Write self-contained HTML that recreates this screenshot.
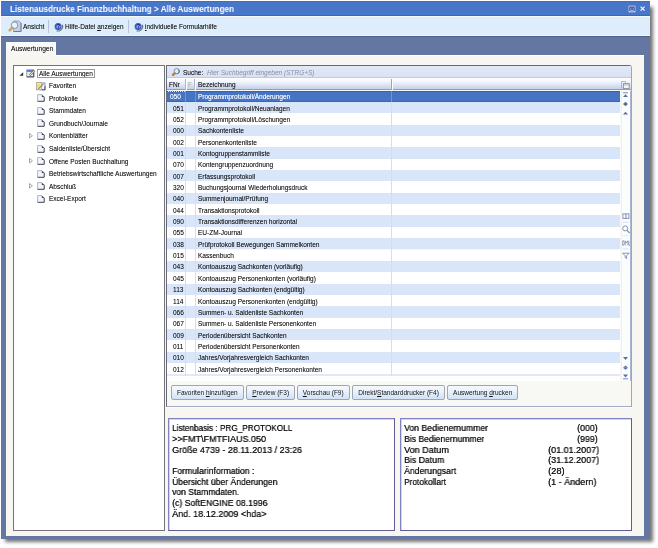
<!DOCTYPE html><html><head><meta charset="utf-8"><style>
*{margin:0;padding:0;box-sizing:border-box}
html,body{width:658px;height:548px;overflow:hidden;background:#fff;font-family:"Liberation Sans",sans-serif;color:#111111}
.a{position:absolute}
.t{position:absolute;white-space:nowrap;font-size:6.5px;line-height:8px}
svg{position:absolute;overflow:visible}
body{-webkit-font-smoothing:antialiased}
.t{will-change:transform;text-shadow:0.1px 0 0 rgba(0,0,0,0.35)}
u{text-decoration-thickness:0.5px;text-underline-offset:0.8px}
</style></head><body>
<div id="wrap" style="position:absolute;left:0;top:0;width:658px;height:548px"><div class="a" style="left:4px;top:6px;width:646px;height:533px;background:#888;box-shadow:2px 2px 3.5px 1px rgba(0,0,0,0.55)"></div><div class="a" style="left:1px;top:1px;width:649px;height:538px;background:#6477a3"></div><div class="a" style="left:1px;top:35.8px;width:649px;height:503.2px;background:#6477a3;border-top:1px solid #50608f"></div><div class="a" style="left:1px;top:1px;width:649px;height:15.3px;background:#4876c9;border-top:1px solid #5068a6;border-bottom:1px solid #4a64a0"></div><div class="t" style="left:10px;top:3.1px;font-weight:bold;color:#fff;text-shadow:none;font-size:9px;line-height:12px;transform:scaleX(0.905);transform-origin:0 0">Listenausdrucke Finanzbuchhaltung &gt; Alle Auswertungen</div><svg style="left:627.5px;top:4.8px" width="8" height="8" viewBox="0 0 8 8"><rect x="0.4" y="0.4" width="7.2" height="7.2" rx="1.2" fill="#a3b8e8"/><path d="M1.9 6.4V2.2H6.1V6.4" fill="none" stroke="#26397c" stroke-width="0.9"/><rect x="3.3" y="3.3" width="1.5" height="1.6" fill="#26397c"/><circle cx="1.6" cy="6.6" r="0.5" fill="#e8f0ff"/><circle cx="6.4" cy="6.6" r="0.5" fill="#e8f0ff"/></svg><svg style="left:639.8px;top:5.8px" width="5.2" height="5.2" viewBox="0 0 5.2 5.2"><path d="M0.6 0.6L4.6 4.6M4.6 0.6L0.6 4.6" stroke="#f4f8ff" stroke-width="1.2"/></svg><div class="a" style="left:1px;top:16.3px;width:649px;height:19.5px;background:#ddedfc;border-top:1px solid #f3fbff;border-bottom:1px solid #f0f8ff"></div><svg style="left:8px;top:20px" width="14" height="13" viewBox="0 0 14 13"><path d="M5.5 1H11L13 3V11.5H5.5Z" fill="#c9cfe2" stroke="#8f98b2" stroke-width="0.8"/><path d="M13 3V11.5H5.5" fill="none" stroke="#6f7894" stroke-width="0.9"/><circle cx="6.5" cy="5.2" r="3.3" fill="#e6f5fd" stroke="#7b8ba6" stroke-width="0.9"/><path d="M4.3 7.6L1.6 10.4" stroke="#c4a26f" stroke-width="2.4" stroke-linecap="round"/></svg><div class="t" style="left:23.4px;top:23.4px;">Ansicht</div><div class="a" style="left:48px;top:20px;width:1px;height:13px;background:#b7c5d8"></div><svg style="left:53.5px;top:21.2px" width="11" height="11" viewBox="0 0 11 11"><path d="M8.4 3.8A4.6 4.6 0 0 1 2.5 9.7" fill="none" stroke="#6d7482" stroke-width="1.1"/><circle cx="4.1" cy="5.4" r="3.5" fill="#3d5cc4"/><circle cx="4.3" cy="5.6" r="2" fill="#7d9ae6"/><path d="M2.7 4.2Q3.9 2.6 5.3 3.6Q5.9 4.8 4.4 5.7V6.6" fill="none" stroke="#1d2f86" stroke-width="1"/><circle cx="4.4" cy="7.9" r="0.6" fill="#1d2f86"/></svg><div class="t" style="left:65px;top:23.4px;">Hilfe-Datei <u>a</u>nzeigen</div><div class="a" style="left:128px;top:20px;width:1px;height:13px;background:#b7c5d8"></div><svg style="left:133.5px;top:21.2px" width="11" height="11" viewBox="0 0 11 11"><path d="M8.4 3.8A4.6 4.6 0 0 1 2.5 9.7" fill="none" stroke="#6d7482" stroke-width="1.1"/><circle cx="4.1" cy="5.4" r="3.5" fill="#3d5cc4"/><circle cx="4.3" cy="5.6" r="2" fill="#7d9ae6"/><path d="M2.7 4.2Q3.9 2.6 5.3 3.6Q5.9 4.8 4.4 5.7V6.6" fill="none" stroke="#1d2f86" stroke-width="1"/><circle cx="4.4" cy="7.9" r="0.6" fill="#1d2f86"/></svg><div class="t" style="left:144.7px;top:23.4px;"><u>i</u>ndividuelle Formularhilfe</div><div class="a" style="left:6px;top:55px;width:638px;height:481px;background:#f7f6f1;border-top:1px solid #fff"></div><div class="a" style="left:6px;top:42px;width:50.3px;height:14px;background:linear-gradient(#f8fafc,#f7f6f1);border-right:1px solid #fff"></div><div class="t" style="left:11px;top:45.2px;font-size:6.6px">Auswertungen</div><div class="a" style="left:13px;top:65px;width:151.5px;height:465.5px;background:#fff;border:1px solid #737373"></div><div class="a" style="left:166.2px;top:65.1px;width:465.5px;height:341.8px;background:#f8f8f5;border:1px solid #666a78;border-right-color:#9aa6c4;border-bottom-color:#a2a8c6;border-top-right-radius:3px;box-shadow:0 1px 0 #fff"></div><div class="a" style="left:167.2px;top:66.1px;width:463.5px;height:11.5px;background:linear-gradient(#e2e9f8,#d9e2f5);border-bottom:1px solid #bccbe0"></div><svg style="left:169.5px;top:67px" width="10" height="10" viewBox="0 0 10 10"><circle cx="6.7" cy="4.2" r="2.6" fill="#ddf3fb" stroke="#7f8b9c" stroke-width="1"/><path d="M8.6 2.6A2.6 2.6 0 0 1 6.8 6.8" fill="none" stroke="#5f6a7c" stroke-width="1"/><path d="M4.6 6.4L3.1 7.9" stroke="#a8845c" stroke-width="2.6" stroke-linecap="round"/></svg><div class="t" style="left:182.5px;top:68.5px;">Suche:</div><div class="t" style="left:206.8px;top:68.5px;font-style:italic;color:#8a90a3;text-shadow:none">Hier Suchbegriff eingeben (STRG+S)</div><div class="a" style="left:167.2px;top:77.6px;width:463.5px;height:12.9px;background:linear-gradient(#ffffff,#f1f5fb 35%,#c3d1e9);border-bottom:1px solid #8d9fbe"></div><div class="a" style="left:184.8px;top:78.5px;width:1.0px;height:11.5px;background:#aeb7cc;box-shadow:1px 0 0 #fff"></div><div class="a" style="left:194.4px;top:78.5px;width:1.0px;height:11.5px;background:#aeb7cc;box-shadow:1px 0 0 #fff"></div><div class="a" style="left:391px;top:78.5px;width:1px;height:11.5px;background:#9ea6ba;box-shadow:1px 0 0 #fff"></div><div class="t" style="left:169.2px;top:81px;">FNr</div><div class="t" style="left:187.8px;top:81px;color:#a5a5a5;text-shadow:none">F</div><div class="t" style="left:197.7px;top:81px;">Bezeichnung</div><svg style="left:620.8px;top:80.8px" width="9" height="8" viewBox="0 0 9 8"><path d="M0.5 7.2V0.5H4.5V2" fill="none" stroke="#a8a8a8" stroke-width="0.8"/><rect x="2.4" y="2.6" width="5.8" height="4.8" fill="#f4f4f4" stroke="#8a8a8a" stroke-width="0.8"/><path d="M2.4 3.9H8.2" stroke="#9a9a9a" stroke-width="0.7"/></svg><div class="a" style="left:167.2px;top:90.6px;width:453.3px;height:11.35px;background:#4674c5;border-top:1px solid #3d5fa6;border-bottom:1px solid #3f65b0"></div><div class="t" style="left:169.8px;top:93.2px;color:#fff;text-shadow:0.1px 0 0 rgba(255,255,255,0.5)">050</div><div class="t" style="left:198.3px;top:93.2px;color:#fff;text-shadow:0.1px 0 0 rgba(255,255,255,0.5)">Programmprotokoll/Änderungen</div><div class="a" style="left:167.2px;top:101.95px;width:453.3px;height:11.35px;background:#d9e6fa"></div><div class="t" style="left:172.5px;top:104.55px;color:#111111">051</div><div class="t" style="left:198.3px;top:104.55px;color:#111111">Programmprotokoll/Neuanlagen</div><div class="a" style="left:167.2px;top:113.3px;width:453.3px;height:11.35px;background:#ffffff"></div><div class="t" style="left:172.5px;top:115.9px;color:#111111">052</div><div class="t" style="left:198.3px;top:115.9px;color:#111111">Programmprotokoll/Löschungen</div><div class="a" style="left:167.2px;top:124.65px;width:453.3px;height:11.35px;background:#d9e6fa"></div><div class="t" style="left:172.5px;top:127.25px;color:#111111">000</div><div class="t" style="left:198.3px;top:127.25px;color:#111111">Sachkontenliste</div><div class="a" style="left:167.2px;top:136.0px;width:453.3px;height:11.35px;background:#ffffff"></div><div class="t" style="left:172.5px;top:138.6px;color:#111111">002</div><div class="t" style="left:198.3px;top:138.6px;color:#111111">Personenkontenliste</div><div class="a" style="left:167.2px;top:147.35px;width:453.3px;height:11.35px;background:#d9e6fa"></div><div class="t" style="left:172.5px;top:149.95px;color:#111111">001</div><div class="t" style="left:198.3px;top:149.95px;color:#111111">Kontogruppenstammliste</div><div class="a" style="left:167.2px;top:158.7px;width:453.3px;height:11.35px;background:#ffffff"></div><div class="t" style="left:172.5px;top:161.3px;color:#111111">070</div><div class="t" style="left:198.3px;top:161.3px;color:#111111">Kontengruppenzuordnung</div><div class="a" style="left:167.2px;top:170.05px;width:453.3px;height:11.35px;background:#d9e6fa"></div><div class="t" style="left:172.5px;top:172.65px;color:#111111">007</div><div class="t" style="left:198.3px;top:172.65px;color:#111111">Erfassungsprotokoll</div><div class="a" style="left:167.2px;top:181.4px;width:453.3px;height:11.35px;background:#ffffff"></div><div class="t" style="left:172.5px;top:184.0px;color:#111111">320</div><div class="t" style="left:198.3px;top:184.0px;color:#111111">Buchungsjournal Wiederholungsdruck</div><div class="a" style="left:167.2px;top:192.75px;width:453.3px;height:11.35px;background:#d9e6fa"></div><div class="t" style="left:172.5px;top:195.35px;color:#111111">040</div><div class="t" style="left:198.3px;top:195.35px;color:#111111">Summenjournal/Prüfung</div><div class="a" style="left:167.2px;top:204.1px;width:453.3px;height:11.35px;background:#ffffff"></div><div class="t" style="left:172.5px;top:206.7px;color:#111111">044</div><div class="t" style="left:198.3px;top:206.7px;color:#111111">Transaktionsprotokoll</div><div class="a" style="left:167.2px;top:215.45px;width:453.3px;height:11.35px;background:#d9e6fa"></div><div class="t" style="left:172.5px;top:218.05px;color:#111111">090</div><div class="t" style="left:198.3px;top:218.05px;color:#111111">Transaktionsdifferenzen horizontal</div><div class="a" style="left:167.2px;top:226.8px;width:453.3px;height:11.35px;background:#ffffff"></div><div class="t" style="left:172.5px;top:229.4px;color:#111111">055</div><div class="t" style="left:198.3px;top:229.4px;color:#111111">EU-ZM-Journal</div><div class="a" style="left:167.2px;top:238.15px;width:453.3px;height:11.35px;background:#d9e6fa"></div><div class="t" style="left:172.5px;top:240.75px;color:#111111">038</div><div class="t" style="left:198.3px;top:240.75px;color:#111111">Prüfprotokoll Bewegungen Sammelkonten</div><div class="a" style="left:167.2px;top:249.5px;width:453.3px;height:11.35px;background:#ffffff"></div><div class="t" style="left:172.5px;top:252.1px;color:#111111">015</div><div class="t" style="left:198.3px;top:252.1px;color:#111111">Kassenbuch</div><div class="a" style="left:167.2px;top:260.85px;width:453.3px;height:11.35px;background:#d9e6fa"></div><div class="t" style="left:172.5px;top:263.45px;color:#111111">043</div><div class="t" style="left:198.3px;top:263.45px;color:#111111">Kontoauszug Sachkonten (vorläufig)</div><div class="a" style="left:167.2px;top:272.2px;width:453.3px;height:11.35px;background:#ffffff"></div><div class="t" style="left:172.5px;top:274.8px;color:#111111">045</div><div class="t" style="left:198.3px;top:274.8px;color:#111111">Kontoauszug Personenkonten (vorläufig)</div><div class="a" style="left:167.2px;top:283.55px;width:453.3px;height:11.35px;background:#d9e6fa"></div><div class="t" style="left:172.5px;top:286.15px;color:#111111">113</div><div class="t" style="left:198.3px;top:286.15px;color:#111111">Kontoauszug Sachkonten (endgültig)</div><div class="a" style="left:167.2px;top:294.9px;width:453.3px;height:11.35px;background:#ffffff"></div><div class="t" style="left:172.5px;top:297.5px;color:#111111">114</div><div class="t" style="left:198.3px;top:297.5px;color:#111111">Kontoauszug Personenkonten (endgültig)</div><div class="a" style="left:167.2px;top:306.25px;width:453.3px;height:11.35px;background:#d9e6fa"></div><div class="t" style="left:172.5px;top:308.85px;color:#111111">066</div><div class="t" style="left:198.3px;top:308.85px;color:#111111">Summen- u. Saldenliste Sachkonten</div><div class="a" style="left:167.2px;top:317.6px;width:453.3px;height:11.35px;background:#ffffff"></div><div class="t" style="left:172.5px;top:320.2px;color:#111111">067</div><div class="t" style="left:198.3px;top:320.2px;color:#111111">Summen- u. Saldenliste Personenkonten</div><div class="a" style="left:167.2px;top:328.95px;width:453.3px;height:11.35px;background:#d9e6fa"></div><div class="t" style="left:172.5px;top:331.55px;color:#111111">009</div><div class="t" style="left:198.3px;top:331.55px;color:#111111">Periodenübersicht Sachkonten</div><div class="a" style="left:167.2px;top:340.3px;width:453.3px;height:11.35px;background:#ffffff"></div><div class="t" style="left:172.5px;top:342.9px;color:#111111">011</div><div class="t" style="left:198.3px;top:342.9px;color:#111111">Periodenübersicht Personenkonten</div><div class="a" style="left:167.2px;top:351.65px;width:453.3px;height:11.35px;background:#d9e6fa"></div><div class="t" style="left:172.5px;top:354.25px;color:#111111">010</div><div class="t" style="left:198.3px;top:354.25px;color:#111111">Jahres/Vorjahresvergleich Sachkonten</div><div class="a" style="left:167.2px;top:363.0px;width:453.3px;height:11.35px;background:#ffffff"></div><div class="t" style="left:172.5px;top:365.6px;color:#111111">012</div><div class="t" style="left:198.3px;top:365.6px;color:#111111">Jahres/Vorjahresvergleich Personenkonten</div><div class="a" style="left:167.2px;top:374.35px;width:453.3px;height:1.6px;background:#e3e8f8"></div><div class="a" style="left:167.2px;top:375.85px;width:453.3px;height:5.55px;background:#fefefe"></div><div class="a" style="left:185px;top:101.9px;width:0.8px;height:273.95px;background:#d3def0"></div><div class="a" style="left:194.6px;top:101.9px;width:0.8px;height:273.95px;background:#d3def0"></div><div class="a" style="left:391.2px;top:101.9px;width:0.8px;height:273.95px;background:#d3def0"></div><div class="a" style="left:185px;top:90.6px;width:0.8px;height:11.3px;background:#6d92d6"></div><div class="a" style="left:194.6px;top:90.6px;width:0.8px;height:11.3px;background:#6d92d6"></div><div class="a" style="left:391.2px;top:90.6px;width:0.8px;height:11.3px;background:#6d92d6"></div><div class="a" style="left:167.6px;top:90.8px;width:17.4px;height:10.8px;border-top:1px dotted rgba(255,255,255,0.8)"></div><div class="a" style="left:620.5px;top:90.5px;width:10.2px;height:290.9px;background:#fbfcfe;border-left:1px solid #eef1f7;border-right:1px solid #aab6d6"></div><svg style="left:0;top:0" width="658" height="548"><rect x="623" y="92.3" width="5" height="1" fill="#5a6f9e" opacity="0.8"/><path d="M623.0 97.1L625.5 94.3L628.0 97.1Z" fill="#5a6f9e"/><path d="M623.0 104.0L625.5 101.8L628.0 104.0Z" fill="#5a6f9e"/><path d="M623.0 104L625.5 106.2L628.0 104Z" fill="#5a6f9e"/><path d="M623.0 114.6L625.5 111.8L628.0 114.6Z" fill="#5a6f9e"/><path d="M623.0 357L625.5 360L628.0 357Z" fill="#5a6f9e"/><path d="M623.0 367.70000000000005L625.5 365.6L628.0 367.70000000000005Z" fill="#5a6f9e"/><path d="M623.0 367.7L625.5 369.8L628.0 367.7Z" fill="#5a6f9e"/><path d="M623.0 374.6L625.5 377.40000000000003L628.0 374.6Z" fill="#5a6f9e"/><rect x="623" y="378.3" width="5" height="1" fill="#5a6f9e" opacity="0.8"/><rect x="622.9" y="213.9" width="6" height="4.5" fill="none" stroke="#7a88a8" stroke-width="0.9"/><path d="M625.9 213.9V218.4" stroke="#7a88a8" stroke-width="1"/><path d="M622.5 222.3H628.5" stroke="#c8d0e2" stroke-width="0.7"/><circle cx="625.2" cy="228.4" r="2.5" fill="none" stroke="#7a88a8" stroke-width="0.9"/><path d="M627 230.3L629.6 233" stroke="#7a88a8" stroke-width="1.1"/><path d="M622.5 235.6H628.5" stroke="#c8d0e2" stroke-width="0.7" stroke-dasharray="1 0.6"/><path d="M622.7 240.8H623.8Q625 243 623.8 245.3H622.7ZM625.3 245.3V240.8L626.6 243L627.9 240.8V245.3M628.9 240.8V245.3H630" fill="none" stroke="#7a88a8" stroke-width="0.75"/><path d="M622.5 249H628.5" stroke="#c8d0e2" stroke-width="0.7"/><path d="M622.6 253.2H629.2L626.6 255.8V258.6L625.2 257.6V255.8Z" fill="none" stroke="#7a88a8" stroke-width="0.9"/></svg><div class="a" style="left:170.6px;top:385px;width:73.6px;height:15px;background:linear-gradient(#f5f9fe,#e9f1fc 45%,#d1e1f7);border:1px solid #9ea6b6;border-radius:2px;display:flex;align-items:center;justify-content:center"><span style="font-size:6.5px;white-space:nowrap;color:#111111">Favoriten <u>h</u>inzufügen</span></div><div class="a" style="left:246.2px;top:385px;width:49.0px;height:15px;background:linear-gradient(#f5f9fe,#e9f1fc 45%,#d1e1f7);border:1px solid #9ea6b6;border-radius:2px;display:flex;align-items:center;justify-content:center"><span style="font-size:6.5px;white-space:nowrap;color:#111111"><u>P</u>review (F3)</span></div><div class="a" style="left:296.9px;top:385px;width:52.7px;height:15px;background:linear-gradient(#f5f9fe,#e9f1fc 45%,#d1e1f7);border:1px solid #9ea6b6;border-radius:2px;display:flex;align-items:center;justify-content:center"><span style="font-size:6.5px;white-space:nowrap;color:#111111"><u>V</u>orschau (F9)</span></div><div class="a" style="left:352px;top:385px;width:93.2px;height:15px;background:linear-gradient(#f5f9fe,#e9f1fc 45%,#d1e1f7);border:1px solid #9ea6b6;border-radius:2px;display:flex;align-items:center;justify-content:center"><span style="font-size:6.5px;white-space:nowrap;color:#111111">Direkt/<u>S</u>tandarddrucker (F4)</span></div><div class="a" style="left:447.2px;top:385px;width:71.0px;height:15px;background:linear-gradient(#f5f9fe,#e9f1fc 45%,#d1e1f7);border:1px solid #9ea6b6;border-radius:2px;display:flex;align-items:center;justify-content:center"><span style="font-size:6.5px;white-space:nowrap;color:#111111">Auswertung <u>d</u>rucken</span></div><div class="a" style="left:168.4px;top:417.6px;width:226.4px;height:113.2px;background:#fff;border:1px solid #8282c2;border-right-color:#5f5c92;border-bottom-color:#5f5c92;box-shadow:inset 1px 1px 0 #d4d4f0"></div><div class="a" style="left:400px;top:417.6px;width:232px;height:113.4px;background:#fff;border:1px solid #8282c2;border-right-color:#5f5c92;border-bottom-color:#5f5c92;box-shadow:inset 1px 1px 0 #d4d4f0"></div><div class="t" style="left:172.4px;top:423.06px;font-size:9.3px;transform:scaleX(0.8827);transform-origin:0 0;line-height:10px;color:#1a1a1a;text-shadow:0.15px 0 0 #1a1a1a">Listenbasis : PRG_PROTOKOLL</div><div class="t" style="left:172.4px;top:433.79px;font-size:9.3px;transform:scaleX(0.9676);transform-origin:0 0;line-height:10px;color:#1a1a1a;text-shadow:0.15px 0 0 #1a1a1a">&gt;&gt;FMT\FMTFIAUS.050</div><div class="t" style="left:172.4px;top:444.52px;font-size:9.3px;transform:scaleX(0.9647);transform-origin:0 0;line-height:10px;color:#1a1a1a;text-shadow:0.15px 0 0 #1a1a1a">Größe 4739 - 28.11.2013 / 23:26</div><div class="t" style="left:172.4px;top:465.98px;font-size:9.3px;transform:scaleX(0.9313);transform-origin:0 0;line-height:10px;color:#1a1a1a;text-shadow:0.15px 0 0 #1a1a1a">Formularinformation :</div><div class="t" style="left:172.4px;top:476.71px;font-size:9.3px;transform:scaleX(0.9268);transform-origin:0 0;line-height:10px;color:#1a1a1a;text-shadow:0.15px 0 0 #1a1a1a">Übersicht über Änderungen</div><div class="t" style="left:172.4px;top:487.44px;font-size:9.3px;transform:scaleX(0.9220);transform-origin:0 0;line-height:10px;color:#1a1a1a;text-shadow:0.15px 0 0 #1a1a1a">von Stammdaten.</div><div class="t" style="left:172.4px;top:498.17px;font-size:9.3px;transform:scaleX(0.9379);transform-origin:0 0;line-height:10px;color:#1a1a1a;text-shadow:0.15px 0 0 #1a1a1a">(c) SoftENGINE 08.1996</div><div class="t" style="left:172.4px;top:508.9px;font-size:9.3px;transform:scaleX(0.9721);transform-origin:0 0;line-height:10px;color:#1a1a1a;text-shadow:0.15px 0 0 #1a1a1a">Änd. 18.12.2009 &lt;hda&gt;</div><div class="t" style="left:403.6px;top:423.06px;font-size:9.3px;transform:scaleX(0.9339);transform-origin:0 0;line-height:10px;color:#1a1a1a;text-shadow:0.15px 0 0 #1a1a1a">Von Bedienernummer</div><div class="t" style="left:403.6px;top:433.79px;font-size:9.3px;transform:scaleX(0.9248);transform-origin:0 0;line-height:10px;color:#1a1a1a;text-shadow:0.15px 0 0 #1a1a1a">Bis Bedienernummer</div><div class="t" style="left:403.6px;top:444.52px;font-size:9.3px;transform:scaleX(0.9738);transform-origin:0 0;line-height:10px;color:#1a1a1a;text-shadow:0.15px 0 0 #1a1a1a">Von Datum</div><div class="t" style="left:403.6px;top:455.25px;font-size:9.3px;transform:scaleX(0.9372);transform-origin:0 0;line-height:10px;color:#1a1a1a;text-shadow:0.15px 0 0 #1a1a1a">Bis Datum</div><div class="t" style="left:403.6px;top:465.98px;font-size:9.3px;transform:scaleX(0.9332);transform-origin:0 0;line-height:10px;color:#1a1a1a;text-shadow:0.15px 0 0 #1a1a1a">Änderungsart</div><div class="t" style="left:403.6px;top:476.71px;font-size:9.3px;transform:scaleX(0.8930);transform-origin:0 0;line-height:10px;color:#1a1a1a;text-shadow:0.15px 0 0 #1a1a1a">Protokollart</div><div class="t" style="left:576.8px;top:423.06px;font-size:9.3px;transform:scaleX(0.9536);transform-origin:0 0;line-height:10px;color:#1a1a1a;text-shadow:0.15px 0 0 #1a1a1a">(000)</div><div class="t" style="left:576.8px;top:433.79px;font-size:9.3px;transform:scaleX(0.9536);transform-origin:0 0;line-height:10px;color:#1a1a1a;text-shadow:0.15px 0 0 #1a1a1a">(999)</div><div class="t" style="left:547.9px;top:444.52px;font-size:9.3px;transform:scaleX(0.9690);transform-origin:0 0;line-height:10px;color:#1a1a1a;text-shadow:0.15px 0 0 #1a1a1a">(01.01.2007)</div><div class="t" style="left:547.9px;top:455.25px;font-size:9.3px;transform:scaleX(0.9690);transform-origin:0 0;line-height:10px;color:#1a1a1a;text-shadow:0.15px 0 0 #1a1a1a">(31.12.2007)</div><div class="t" style="left:547.9px;top:465.98px;font-size:9.3px;transform:scaleX(0.9917);transform-origin:0 0;line-height:10px;color:#1a1a1a;text-shadow:0.15px 0 0 #1a1a1a">(28)</div><div class="t" style="left:547.9px;top:476.71px;font-size:9.3px;transform:scaleX(0.9735);transform-origin:0 0;line-height:10px;color:#1a1a1a;text-shadow:0.15px 0 0 #1a1a1a">(1 - Ändern)</div><svg style="left:18.5px;top:72px" width="4.5" height="4" viewBox="0 0 4.5 4"><path d="M4.2 0.2V3.8H0.4Z" fill="#333"/></svg><svg style="left:25.5px;top:69px" width="10" height="9" viewBox="0 0 10 9"><rect x="0.8" y="0.9" width="7" height="7" fill="#e9eef8" stroke="#707a9a" stroke-width="0.7"/><rect x="0.8" y="0.9" width="7" height="2" fill="#5f78d4"/><path d="M0.8 7.9H7.8V4" fill="none" stroke="#3a3f55" stroke-width="0.9"/><path d="M3.6 6.2L8.6 1.6" stroke="#505030" stroke-width="2.2"/><path d="M3.6 6.2L8.6 1.6" stroke="#e4e79a" stroke-width="1.2"/></svg><div class="t" style="left:39.2px;top:70.2px;">Alle Auswertungen</div><div class="a" style="left:37.2px;top:69.3px;width:57.6px;height:8.6px;border:0.8px solid #9a9a9a"></div><svg style="left:35.8px;top:81.8px" width="10" height="8.5" viewBox="0 0 10 8.5"><rect x="4" y="1" width="5" height="6.8" fill="#f6f7fc" stroke="#7880a4" stroke-width="0.8"/><path d="M9 4V7.8H6" fill="none" stroke="#3f4868" stroke-width="0.9"/><rect x="0.5" y="0.6" width="5.2" height="7.2" fill="#eee9c4" stroke="#ab9f86" stroke-width="0.8"/><circle cx="2.7" cy="4" r="1.9" fill="#ebe06a"/><path d="M2 7.4L7.6 1.8" stroke="#6e6058" stroke-width="1"/></svg><div class="t" style="left:49px;top:82.2px;">Favoriten</div><svg style="left:36.8px;top:94.35px" width="8" height="8" viewBox="0 0 8 8"><path d="M0.6 0.6H5L7.2 2.8V7.3H0.6Z" fill="#f2f5fb"/><path d="M0.6 7.3V0.6H5" fill="none" stroke="#a9aec2" stroke-width="0.9"/><path d="M0.6 7.3H7.2V2.8" fill="none" stroke="#3c414e" stroke-width="1"/><path d="M4.8 0.6L7.4 3.1H4.8Z" fill="#3c414e"/></svg><div class="t" style="left:49px;top:94.75px;">Protokolle</div><svg style="left:36.8px;top:106.9px" width="8" height="8" viewBox="0 0 8 8"><path d="M0.6 0.6H5L7.2 2.8V7.3H0.6Z" fill="#f2f5fb"/><path d="M0.6 7.3V0.6H5" fill="none" stroke="#a9aec2" stroke-width="0.9"/><path d="M0.6 7.3H7.2V2.8" fill="none" stroke="#3c414e" stroke-width="1"/><path d="M4.8 0.6L7.4 3.1H4.8Z" fill="#3c414e"/></svg><div class="t" style="left:49px;top:107.3px;">Stammdaten</div><svg style="left:36.8px;top:119.45px" width="8" height="8" viewBox="0 0 8 8"><path d="M0.6 0.6H5L7.2 2.8V7.3H0.6Z" fill="#f2f5fb"/><path d="M0.6 7.3V0.6H5" fill="none" stroke="#a9aec2" stroke-width="0.9"/><path d="M0.6 7.3H7.2V2.8" fill="none" stroke="#3c414e" stroke-width="1"/><path d="M4.8 0.6L7.4 3.1H4.8Z" fill="#3c414e"/></svg><div class="t" style="left:49px;top:119.85px;">Grundbuch/Journale</div><svg style="left:36.8px;top:132.0px" width="8" height="8" viewBox="0 0 8 8"><path d="M0.6 0.6H5L7.2 2.8V7.3H0.6Z" fill="#f2f5fb"/><path d="M0.6 7.3V0.6H5" fill="none" stroke="#a9aec2" stroke-width="0.9"/><path d="M0.6 7.3H7.2V2.8" fill="none" stroke="#3c414e" stroke-width="1"/><path d="M4.8 0.6L7.4 3.1H4.8Z" fill="#3c414e"/></svg><svg style="left:28.6px;top:133.0px" width="4" height="5.5" viewBox="0 0 4 5.5"><path d="M0.5 0.5L3.4 2.75L0.5 5Z" fill="#fff" stroke="#8f8f8f" stroke-width="0.8"/></svg><div class="t" style="left:49px;top:132.4px;">Kontenblätter</div><svg style="left:36.8px;top:144.55px" width="8" height="8" viewBox="0 0 8 8"><path d="M0.6 0.6H5L7.2 2.8V7.3H0.6Z" fill="#f2f5fb"/><path d="M0.6 7.3V0.6H5" fill="none" stroke="#a9aec2" stroke-width="0.9"/><path d="M0.6 7.3H7.2V2.8" fill="none" stroke="#3c414e" stroke-width="1"/><path d="M4.8 0.6L7.4 3.1H4.8Z" fill="#3c414e"/></svg><div class="t" style="left:49px;top:144.95px;">Saldenliste/Übersicht</div><svg style="left:36.8px;top:157.1px" width="8" height="8" viewBox="0 0 8 8"><path d="M0.6 0.6H5L7.2 2.8V7.3H0.6Z" fill="#f2f5fb"/><path d="M0.6 7.3V0.6H5" fill="none" stroke="#a9aec2" stroke-width="0.9"/><path d="M0.6 7.3H7.2V2.8" fill="none" stroke="#3c414e" stroke-width="1"/><path d="M4.8 0.6L7.4 3.1H4.8Z" fill="#3c414e"/></svg><svg style="left:28.6px;top:158.1px" width="4" height="5.5" viewBox="0 0 4 5.5"><path d="M0.5 0.5L3.4 2.75L0.5 5Z" fill="#fff" stroke="#8f8f8f" stroke-width="0.8"/></svg><div class="t" style="left:49px;top:157.5px;">Offene Posten Buchhaltung</div><svg style="left:36.8px;top:169.65px" width="8" height="8" viewBox="0 0 8 8"><path d="M0.6 0.6H5L7.2 2.8V7.3H0.6Z" fill="#f2f5fb"/><path d="M0.6 7.3V0.6H5" fill="none" stroke="#a9aec2" stroke-width="0.9"/><path d="M0.6 7.3H7.2V2.8" fill="none" stroke="#3c414e" stroke-width="1"/><path d="M4.8 0.6L7.4 3.1H4.8Z" fill="#3c414e"/></svg><div class="t" style="left:49px;top:170.05px;">Betriebswirtschaftliche Auswertungen</div><svg style="left:36.8px;top:182.2px" width="8" height="8" viewBox="0 0 8 8"><path d="M0.6 0.6H5L7.2 2.8V7.3H0.6Z" fill="#f2f5fb"/><path d="M0.6 7.3V0.6H5" fill="none" stroke="#a9aec2" stroke-width="0.9"/><path d="M0.6 7.3H7.2V2.8" fill="none" stroke="#3c414e" stroke-width="1"/><path d="M4.8 0.6L7.4 3.1H4.8Z" fill="#3c414e"/></svg><svg style="left:28.6px;top:183.2px" width="4" height="5.5" viewBox="0 0 4 5.5"><path d="M0.5 0.5L3.4 2.75L0.5 5Z" fill="#fff" stroke="#8f8f8f" stroke-width="0.8"/></svg><div class="t" style="left:49px;top:182.6px;">Abschluß</div><svg style="left:36.8px;top:194.75px" width="8" height="8" viewBox="0 0 8 8"><path d="M0.6 0.6H5L7.2 2.8V7.3H0.6Z" fill="#f2f5fb"/><path d="M0.6 7.3V0.6H5" fill="none" stroke="#a9aec2" stroke-width="0.9"/><path d="M0.6 7.3H7.2V2.8" fill="none" stroke="#3c414e" stroke-width="1"/><path d="M4.8 0.6L7.4 3.1H4.8Z" fill="#3c414e"/></svg><div class="t" style="left:49px;top:195.15px;">Excel-Export</div></div>
</body></html>
